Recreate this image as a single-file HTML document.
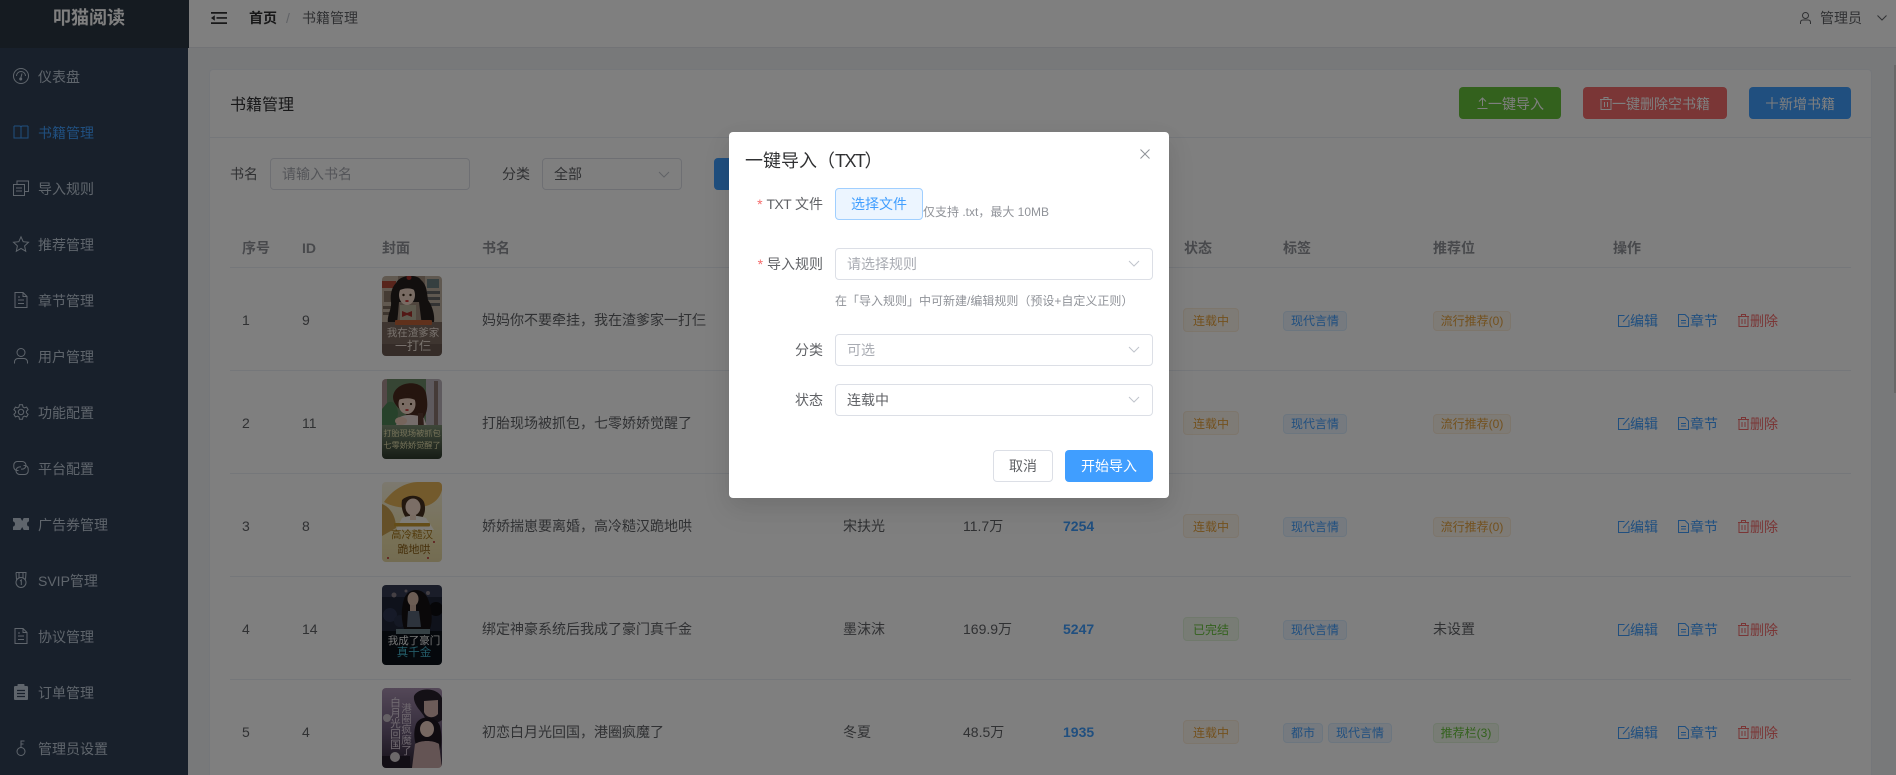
<!DOCTYPE html>
<html lang="zh-CN"><head><meta charset="utf-8"><title>书籍管理</title>
<style>
*{box-sizing:border-box}
html,body{margin:0;padding:0;width:1896px;height:775px;overflow:hidden;background:#f0f2f5;font-family:"Liberation Sans","Noto Sans CJK SC",sans-serif;font-size:14px;color:#606266}
#wrap{position:relative;width:1896px;height:775px;overflow:hidden;background:#f0f2f5}
.a,.t{position:absolute}
.t{white-space:nowrap;line-height:20px}
svg{display:block;overflow:visible}
.ic{position:absolute;fill:none;stroke:currentColor;stroke-width:1}
#side{left:0;top:0;width:188px;height:775px;background:#304156}
#logo{left:0;top:0;width:189px;height:48px;background:#2b3743;color:#fff;font-weight:700;font-size:18px;line-height:37px;padding-left:53px;white-space:nowrap}
.m{left:38px;color:#bfcbd9;line-height:22px;white-space:nowrap}
.si{left:13px;color:#bfcbd9}
#head{left:188px;top:0;width:1708px;height:48px;background:#fff;border-bottom:1px solid #e4e7ed}
#card{left:209px;top:69px;width:1663px;height:706px;background:#fff;border:1px solid #ebeef5;border-bottom:0;border-radius:4px 4px 0 0}
.btn{position:absolute;top:87px;height:32px;border-radius:4px;color:#fff;line-height:34px;white-space:nowrap}
.inp{position:absolute;height:32px;background:#fff;border:1px solid #dcdfe6;border-radius:4px}
.th{top:238px;font-weight:700;color:#909399}
.ln{position:absolute;left:230px;width:1621px;height:1px;background:#ebeef5}
.row{position:absolute;left:0;top:0;width:1896px;height:96px}
.row .t{top:43px}
.cv{position:absolute;left:382px;top:9px;width:60px;height:80px;border-radius:4px;overflow:hidden}
.cv svg{filter:blur(.3px)}
.tag{position:absolute;font-size:12px;text-align:center;border-radius:4px;border:1px solid;white-space:nowrap}
.st{left:1183px;top:41px;width:56px;height:24px;line-height:24px}
.lb{top:44px;height:20px;line-height:18px}
.w{color:#e6a23c;background:#fdf6ec;border-color:#faecd8}
.s{color:#67c23a;background:#f0f9eb;border-color:#e1f3d8}
.b{color:#409eff;background:#ecf5ff;border-color:#d9ecff}
.num{left:1063px;font-weight:700;color:#409eff}
.ac{position:absolute;top:44px;line-height:20px;white-space:nowrap}
.ac svg{position:absolute;left:0;top:3px;fill:none;stroke:currentColor;stroke-width:1}
.ac span{position:absolute;left:12px;top:0}
.blue{color:#409eff}.red{color:#f56c6c}
#mask{left:0;top:0;width:1896px;height:775px;background:rgba(0,0,0,.5)}
#dlg{left:729px;top:132px;width:440px;height:366px;background:#fff;border-radius:4px;box-shadow:0 12px 32px 4px rgba(0,0,0,.04),0 8px 20px rgba(0,0,0,.08)}
.lab{color:#606266;text-align:right;right:346px}
.star{color:#f56c6c}
.sel{position:absolute;left:106px;width:318px;height:32px;background:#fff;border:1px solid #dcdfe6;border-radius:4px;padding-left:11px;line-height:30px;color:#a8abb2}
.sel svg{position:absolute;right:12px;top:11px;fill:none;stroke:#c0c4cc;stroke-width:1}
#thumb{left:1894px;top:65px;width:2px;height:328px;background:#d0d0d0}
</style></head>
<body>
<div id="wrap">
<div class="a" id="head"></div>
<div class="a" id="side"></div>
<div class="a" id="logo">叩猫阅读</div>

<div class="a m" style="top:66px">仪表盘</div>
<div class="a m" style="top:122px;color:#409eff">书籍管理</div>
<div class="a m" style="top:178px">导入规则</div>
<div class="a m" style="top:234px">推荐管理</div>
<div class="a m" style="top:290px">章节管理</div>
<div class="a m" style="top:346px">用户管理</div>
<div class="a m" style="top:402px">功能配置</div>
<div class="a m" style="top:458px">平台配置</div>
<div class="a m" style="top:514px">广告券管理</div>
<div class="a m" style="top:570px">SVIP管理</div>
<div class="a m" style="top:626px">协议管理</div>
<div class="a m" style="top:682px">订单管理</div>
<div class="a m" style="top:738px">管理员设置</div>

<svg class="ic si" style="top:68px" width="16" height="16" viewBox="0 0 16 16"><circle cx="8" cy="8" r="7.500"/><path d="M3.500 8a4.500 4.500 0 0 1 9 0M9 5.500 7.800 10"/><circle cx="7.700" cy="11" r="1" fill="currentColor"/></svg>
<svg class="ic si" style="top:124px;color:#409eff" width="16" height="16" viewBox="0 0 16 16"><path d="M1 2h5.500C7.500 2 8 2.700 8 3.500V14.500M15 2H9.500C8.500 2 8 2.700 8 3.500M1 2v12h14V2"/></svg>
<svg class="ic si" style="top:180px" width="16" height="16" viewBox="0 0 16 16"><path d="M.5 4.500h11v11H.5zM4 4.500V1h11.500v10.500H11.500M3 8h6M3 11h6"/></svg>
<svg class="ic si" style="top:236px" width="16" height="16" viewBox="0 0 16 16"><path d="M8 .8l2.200 4.900 5.300.6-3.900 3.600 1.100 5.300L8 12.500l-4.700 2.700 1.100-5.300L.5 6.300l5.300-.6z"/></svg>
<svg class="ic si" style="top:292px" width="16" height="16" viewBox="0 0 16 16"><path d="M2 .5h8l4 4v11H2zM10 .5v4h4M5 8h6M5 11.500h6M5 5h2"/></svg>
<svg class="ic si" style="top:348px" width="16" height="16" viewBox="0 0 16 16"><circle cx="8" cy="4.500" r="4"/><path d="M1.500 15.500V14c0-2 1.500-3.500 3.500-3.500h6c2 0 3.500 1.500 3.500 3.500v1.500"/></svg>
<svg class="ic si" style="top:404px" width="16" height="16" viewBox="0 0 16 16"><path d="M6.500.8h3l.5 2.200 1.400.8 2.200-.7 1.500 2.600-1.700 1.500v1.600l1.700 1.500-1.500 2.600-2.200-.7-1.400.8-.5 2.200h-3L6 13l-1.400-.8-2.200.7L.9 10.300l1.700-1.500V7.200L.9 5.700l1.500-2.600 2.200.7L6 3z"/><circle cx="8" cy="8" r="2.700"/></svg>
<svg class="ic si" style="top:460px" width="16" height="16" viewBox="0 0 16 16"><path d="M5.500 10.500H4.300A3.500 3.500 0 0 1 .8 7V5A3.500 3.500 0 0 1 4.300 1.500h4.900A3.800 3.800 0 0 1 13 5.300 3.800 3.800 0 0 1 9.200 9.100H8"/><path d="M10.500 5.500h1.200A3.500 3.500 0 0 1 15.200 9v2a3.500 3.500 0 0 1-3.500 3.500H6.800A3.800 3.800 0 0 1 3 10.700 3.800 3.800 0 0 1 6.800 6.900H8"/></svg>
<svg class="a si" style="top:518px" width="16" height="12" viewBox="0 0 16 12"><path fill="#bfcbd9" d="M0 0h7.500l1.700 3 1.500-3H16v3.500c-1.200 0-2 1-2 2.500s.8 2.500 2 2.500V12h-5.300L9.200 9l-1.700 3H0V8.500c1.200 0 2-1 2-2.500s-.8-2.500-2-2.500z"/></svg>
<svg class="ic si" style="top:572px" width="16" height="16" viewBox="0 0 16 16"><path d="M3 .5h10l-.5 7M3 .5l.5 7M6 .5v5.500M10 .5v5.500"/><circle cx="8" cy="10.500" r="5"/><path d="M7 9l1.300-1v5"/></svg>
<svg class="ic si" style="top:628px" width="16" height="16" viewBox="0 0 16 16"><path d="M2 .5h8l4 4v11H2zM10 .5v4h4M5 8h6M5 11.500h6M5 5h2"/></svg>
<svg class="a si" style="top:684px" width="16" height="16" viewBox="0 0 16 16"><path fill="#bfcbd9" d="M2 2h2.500V.8c0-.4.300-.8.800-.8h5.400c.5 0 .8.400.8.800V2H14c.5 0 1 .5 1 1v12c0 .5-.5 1-1 1H2c-.5 0-1-.5-1-1V3c0-.5.500-1 1-1z"/><path stroke="#304156" stroke-width="1.300" d="M4 6.500h8M4 9.500h8M4 12.500h8"/></svg>
<svg class="ic si" style="top:740px" width="16" height="16" viewBox="0 0 16 16"><circle cx="8" cy="11.500" r="4"/><path d="M8 7.500V.5M8 1h3.500M8 4h2.500"/></svg>

<svg class="a" style="left:211px;top:12px" width="16" height="12" viewBox="0 0 16 12"><path fill="#303133" d="M0 0h16v1.700H0zM5.500 5.100H16v1.700H5.500zM0 10.200h16V12H0zM0 6l3.800-2.800v5.600z"/></svg>
<div class="t" style="left:249px;top:8px;font-weight:700;color:#303133">首页</div>
<div class="t" style="left:286px;top:8px;color:#c0c4cc">/</div>
<div class="t" style="left:302px;top:8px">书籍管理</div>
<svg class="ic" style="left:1800px;top:12px;color:#606266" width="11" height="12" viewBox="0 0 11 12"><circle cx="5.500" cy="3.500" r="3"/><path d="M.5 12v-1.500C.5 9 1.500 8 3 8h5c1.500 0 2.500 1 2.500 2.500V12"/></svg>
<div class="t" style="left:1820px;top:8px;color:#606266">管理员</div>
<svg class="ic" style="left:1877px;top:15px;color:#606266" width="10" height="6" viewBox="0 0 10 6"><path d="M.5.500 5 5 9.500.5"/></svg>

<div class="a" id="card"></div>
<div class="t" style="left:230px;top:96px;font-size:16px;color:#303133">书籍管理</div>
<div class="a" style="left:210px;top:137px;width:1661px;height:1px;background:#ebeef5"></div>
<div class="btn" style="left:1459px;width:102px;background:#67c23a;padding-left:29px">一键导入</div>
<svg class="ic" style="left:1477px;top:97px;color:#fff" width="11" height="12" viewBox="0 0 11 12"><path d="M.5 11.500h10M5.500 9V1M2 4.500 5.500 1 9 4.500"/></svg>
<div class="btn" style="left:1583px;width:144px;background:#f56c6c;padding-left:29px">一键删除空书籍</div>
<svg class="ic" style="left:1600px;top:97px;color:#fff" width="12" height="13" viewBox="0 0 12 13"><path d="M0 2.500h12M4 2.500V.5h4v2M1 2.500h10v10H1zM4.500 5v5M7.500 5v5"/></svg>
<div class="btn" style="left:1749px;width:102px;background:#409eff;padding-left:30px">新增书籍</div>
<svg class="ic" style="left:1766px;top:97px;color:#fff" width="12" height="12" viewBox="0 0 12 12"><path d="M6 0v12M0 6h12"/></svg>

<div class="t" style="left:230px;top:164px">书名</div>
<div class="inp" style="left:270px;top:158px;width:200px;padding-left:11px;line-height:30px;color:#a8abb2">请输入书名</div>
<div class="t" style="left:502px;top:164px">分类</div>
<div class="inp" style="left:542px;top:158px;width:140px;padding-left:11px;line-height:30px">全部</div>
<svg class="ic" style="left:658px;top:171px;color:#c0c4cc" width="12" height="7" viewBox="0 0 12 7"><path d="M1 1l5 5 5-5"/></svg>
<div class="btn" style="left:714px;top:158px;width:80px;background:#409eff"></div>

<div class="t th" style="left:242px">序号</div>
<div class="t th" style="left:302px">ID</div>
<div class="t th" style="left:382px">封面</div>
<div class="t th" style="left:482px">书名</div>
<div class="t th" style="left:1184px">状态</div>
<div class="t th" style="left:1283px">标签</div>
<div class="t th" style="left:1433px">推荐位</div>
<div class="t th" style="left:1613px">操作</div>
<div class="ln" style="top:267px"></div>
<div class="ln" style="top:370px"></div>
<div class="ln" style="top:473px"></div>
<div class="ln" style="top:576px"></div>
<div class="ln" style="top:679px"></div>

<!-- ROW 1 -->
<div class="row" style="top:267px">
<div class="t" style="left:242px">1</div><div class="t" style="left:302px">9</div>
<div class="cv"><svg width="60" height="80" viewBox="0 0 60 80">
<rect width="60" height="80" fill="#a08c7c"/>
<rect width="16" height="46" fill="#c2b2a0"/><rect y="5" width="14" height="7" fill="#b04a38"/><rect x="2" y="15" width="10" height="11" fill="#8a7868"/><rect x="1" y="30" width="11" height="3" fill="#7a6a5c"/><rect x="1" y="36" width="11" height="3" fill="#7a6a5c"/>
<rect x="43" width="17" height="46" fill="#beb0a0"/><rect x="45" y="3" width="12" height="9" fill="#6a7e80"/><rect x="45" y="15" width="13" height="3" fill="#666"/><rect x="45" y="21" width="13" height="3" fill="#666"/><rect x="45" y="27" width="13" height="3" fill="#666"/>
<path fill="#241f1d" d="M14 7C18-2 36-2 39 4c6 5 6 13 7 20 5 7 8 18 5 26H40l-3-24-20 0-2 24H7C3 42 10 34 9 26 8 18 10 11 14 7z"/>
<ellipse cx="25" cy="19" rx="8" ry="10" fill="#f0d6c6"/><path fill="#241f1d" d="M16 15c3-8 16-9 18 0-5-4-13-3-18 0z"/>
<circle cx="21.500" cy="19" r="1.200" fill="#321"/><circle cx="28.500" cy="19" r="1.200" fill="#321"/><ellipse cx="25" cy="25" rx="1.800" ry="1" fill="#c33"/>
<rect x="18" y="29" width="16" height="18" fill="#b8b29a"/><path fill="#a5302a" d="M20 35l5 2 5-2v6l-5-2-5 2z"/><circle cx="27" cy="1.500" r="2.500" fill="#a8302a"/>
<rect y="46" width="60" height="34" fill="#7d6a60"/><rect y="68" width="60" height="12" fill="#6a5850"/>
<rect x="13" y="44" width="37" height="5" rx="1" fill="#c06238"/>
<text x="31" y="60" text-anchor="middle" font-size="10.500" fill="#f0e4da">我在渣爹家</text>
<text x="31" y="74" text-anchor="middle" font-size="12" fill="#f0e4da">一打仨</text>
</svg></div>
<div class="t" style="left:482px">妈妈你不要牵挂，我在渣爹家一打仨</div>
<div class="tag st w">连载中</div><div class="tag lb b" style="left:1283px;width:64px">现代言情</div><div class="tag lb w" style="left:1433px;width:78px">流行推荐(0)</div>
<div class="ac blue" style="left:1618px"><svg width="12" height="13" viewBox="0 0 12 13"><path d="M6.500 1.500H.5v11h10.500V6M5 8l6-7"/></svg><span>编辑</span></div>
<div class="ac blue" style="left:1678px"><svg width="11" height="13" viewBox="0 0 11 13"><path d="M.5.500h6.500l3.500 3.500v8.500H.5zM3 6.500h5M3 9h5"/></svg><span>章节</span></div>
<div class="ac red" style="left:1738px"><svg width="11" height="13" viewBox="0 0 11 13"><path d="M0 2.500h11M3.500 2.500V.5h4v2M1 2.500h9v10H1zM4 5v5M7 5v5"/></svg><span>删除</span></div>
</div>

<!-- ROW 2 -->
<div class="row" style="top:370px">
<div class="t" style="left:242px">2</div><div class="t" style="left:302px">11</div>
<div class="cv"><svg width="60" height="80" viewBox="0 0 60 80">
<defs><linearGradient id="g2" x1="0" y1="0" x2="0" y2="1"><stop offset="0" stop-color="#7d8f74"/><stop offset="1" stop-color="#2e3a2c"/></linearGradient></defs>
<rect width="60" height="80" fill="#6d8a68"/>
<rect x="0" width="5" height="40" fill="#a89090"/><rect x="44" y="0" width="16" height="48" fill="#bcb4bc"/><rect x="52" y="2" width="4" height="44" fill="#8a7670"/>
<path fill="#4f8456" d="M5 24c6-4 10 2 11 10l-2 14H0V30z"/>
<path fill="#4a2a1e" d="M11 18C12 2 40-1 44 14c2 10 2 18-2 24-2 8-8 10-10 6-3-8-21-14-21-26z"/>
<ellipse cx="25" cy="25" rx="8.500" ry="10" fill="#f4d8c8"/><path fill="#4a2a1e" d="M16 21c3-8 17-9 19 1-6-4-13-3-19-1z"/>
<circle cx="21" cy="25" r="1.100" fill="#321"/><circle cx="29" cy="25" r="1.100" fill="#321"/><ellipse cx="25" cy="31" rx="1.800" ry="1" fill="#c44"/>
<path fill="#eadad6" d="M18 38c6-3 16-3 24 1l4 11H12z"/><ellipse cx="19" cy="42" rx="6" ry="4" fill="#eccab8"/><path fill="#5a3a30" d="M36 34l5 0 1 14h-6z"/>
<rect y="46" width="60" height="34" fill="url(#g2)"/>
<text x="30" y="57" text-anchor="middle" font-size="8.200" fill="#e8e2b0">打胎现场被抓包</text>
<text x="30" y="69" text-anchor="middle" font-size="8.200" fill="#e8e2b0">七零娇娇觉醒了</text>
</svg></div>
<div class="t" style="left:482px">打胎现场被抓包，七零娇娇觉醒了</div>
<div class="tag st w">连载中</div><div class="tag lb b" style="left:1283px;width:64px">现代言情</div><div class="tag lb w" style="left:1433px;width:78px">流行推荐(0)</div>
<div class="ac blue" style="left:1618px"><svg width="12" height="13" viewBox="0 0 12 13"><path d="M6.500 1.500H.5v11h10.500V6M5 8l6-7"/></svg><span>编辑</span></div>
<div class="ac blue" style="left:1678px"><svg width="11" height="13" viewBox="0 0 11 13"><path d="M.5.500h6.500l3.500 3.500v8.500H.5zM3 6.500h5M3 9h5"/></svg><span>章节</span></div>
<div class="ac red" style="left:1738px"><svg width="11" height="13" viewBox="0 0 11 13"><path d="M0 2.500h11M3.500 2.500V.5h4v2M1 2.500h9v10H1zM4 5v5M7 5v5"/></svg><span>删除</span></div>
</div>

<!-- ROW 3 -->
<div class="row" style="top:473px">
<div class="t" style="left:242px">3</div><div class="t" style="left:302px">8</div>
<div class="cv"><svg width="60" height="80" viewBox="0 0 60 80">
<defs><linearGradient id="g3" x1="0" y1="0" x2="0" y2="1"><stop offset="0" stop-color="#f8f2de"/><stop offset=".7" stop-color="#f0e2ac"/><stop offset="1" stop-color="#e6d8a4"/></linearGradient></defs>
<rect width="60" height="80" fill="url(#g3)"/>
<path fill="#e6b458" d="M2 20C10 8 24 0 36 0h24v8c-2 8-8 14-16 16-14 4-32 2-42-4z"/>
<path fill="#caa050" d="M0 22c6 2 14 10 14 24L0 54z"/>
<path fill="#46301e" d="M20 18c6-6 18-6 22 2 2 6 1 12-2 16H24c-4-6-5-12-4-18z"/>
<ellipse cx="31" cy="25" rx="7.500" ry="8.500" fill="#f6dccc"/>
<path fill="#fcf8ee" d="M20 36c6-3 16-3 24 0l8 12H14z"/><path fill="#f2d8c4" d="M28 33h6v5h-6z"/>
<rect x="12" y="41" width="36" height="3.500" rx="1" fill="#c89a30"/>
<text x="30" y="56" text-anchor="middle" font-size="10.500" fill="#a47418">高冷糙汉</text>
<text x="32" y="71" text-anchor="middle" font-size="11" fill="#8a5e14">跪地哄</text>
<circle cx="6" cy="76" r="1" fill="#b33"/><circle cx="52" cy="60" r="1" fill="#b33"/><circle cx="46" cy="76" r="1" fill="#b33"/>
</svg></div>
<div class="t" style="left:482px">娇娇揣崽要离婚，高冷糙汉跪地哄</div>
<div class="t" style="left:843px">宋扶光</div><div class="t" style="left:963px">11.7万</div><div class="t num">7254</div>
<div class="tag st w">连载中</div><div class="tag lb b" style="left:1283px;width:64px">现代言情</div><div class="tag lb w" style="left:1433px;width:78px">流行推荐(0)</div>
<div class="ac blue" style="left:1618px"><svg width="12" height="13" viewBox="0 0 12 13"><path d="M6.500 1.500H.5v11h10.500V6M5 8l6-7"/></svg><span>编辑</span></div>
<div class="ac blue" style="left:1678px"><svg width="11" height="13" viewBox="0 0 11 13"><path d="M.5.500h6.500l3.500 3.500v8.500H.5zM3 6.500h5M3 9h5"/></svg><span>章节</span></div>
<div class="ac red" style="left:1738px"><svg width="11" height="13" viewBox="0 0 11 13"><path d="M0 2.500h11M3.500 2.500V.5h4v2M1 2.500h9v10H1zM4 5v5M7 5v5"/></svg><span>删除</span></div>
</div>

<!-- ROW 4 -->
<div class="row" style="top:576px">
<div class="t" style="left:242px">4</div><div class="t" style="left:302px">14</div>
<div class="cv"><svg width="60" height="80" viewBox="0 0 60 80">
<rect width="60" height="80" fill="#10151f"/><rect width="60" height="46" fill="#1e2536"/><rect width="60" height="12" fill="#343a52"/>
<circle cx="8" cy="30" r="7" fill="#2c3450"/><circle cx="18" cy="36" r="6" fill="#283048"/><circle cx="54" cy="24" r="7" fill="#0c0c10"/><circle cx="12" cy="10" r="2.500" fill="#8a8088"/><circle cx="46" cy="8" r="2" fill="#8a8088"/><circle cx="24" cy="6" r="1.500" fill="#8a8088"/>
<path fill="#141012" d="M22 14c4-12 20-12 24 0 4 10 5 22 2 30H22c-3-10-3-20 0-30z"/>
<ellipse cx="31" cy="14" rx="5.500" ry="7" fill="#d8baa8"/><path fill="#cfb0a0" d="M28 20h6v6h-6z"/><path fill="#5a6678" d="M26 26h11l2 16H25z"/>
<rect y="46" width="60" height="34" fill="#0a1018"/><rect x="14" y="44" width="34" height="5" fill="#6a8088"/>
<text x="32" y="59" text-anchor="middle" font-size="10.500" fill="#f0f0f0">我成了豪门</text>
<text x="32" y="71" text-anchor="middle" font-size="11.500" fill="#48b8d0">真千金</text>
</svg></div>
<div class="t" style="left:482px">绑定神豪系统后我成了豪门真千金</div>
<div class="t" style="left:843px">墨沫沫</div><div class="t" style="left:963px">169.9万</div><div class="t num">5247</div>
<div class="tag st s">已完结</div><div class="tag lb b" style="left:1283px;width:64px">现代言情</div><div class="t" style="left:1433px">未设置</div>
<div class="ac blue" style="left:1618px"><svg width="12" height="13" viewBox="0 0 12 13"><path d="M6.500 1.500H.5v11h10.500V6M5 8l6-7"/></svg><span>编辑</span></div>
<div class="ac blue" style="left:1678px"><svg width="11" height="13" viewBox="0 0 11 13"><path d="M.5.500h6.500l3.500 3.500v8.500H.5zM3 6.500h5M3 9h5"/></svg><span>章节</span></div>
<div class="ac red" style="left:1738px"><svg width="11" height="13" viewBox="0 0 11 13"><path d="M0 2.500h11M3.500 2.500V.5h4v2M1 2.500h9v10H1zM4 5v5M7 5v5"/></svg><span>删除</span></div>
</div>

<!-- ROW 5 -->
<div class="row" style="top:679px">
<div class="t" style="left:242px">5</div><div class="t" style="left:302px">4</div>
<div class="cv"><svg width="60" height="80" viewBox="0 0 60 80">
<defs><linearGradient id="g5" x1="0" y1="0" x2="0" y2="1"><stop offset="0" stop-color="#a890b0"/><stop offset=".55" stop-color="#6a5a78"/><stop offset="1" stop-color="#2c2232"/></linearGradient></defs>
<rect width="60" height="80" fill="url(#g5)"/>
<path fill="#28202c" d="M32 8C36-1 56-1 60 10v22c-8 6-16 2-18-4-4-6-11-12-10-20z"/><path fill="#d8b6b0" d="M42 13l14-1v14c-4 5-12 4-14-2z"/>
<path fill="#1e1620" d="M34 36c4-9 20-9 24 2 2 10 2 18 0 24H36c-4-8-5-18-2-26z"/>
<ellipse cx="45" cy="41" rx="7" ry="8" fill="#eccfc2"/>
<path fill="#c8a8a8" d="M33 56c6-4 18-4 24 0l3 24H30z"/>
<rect x="0" y="68" width="28" height="12" fill="#241c2a"/>
<text x="13" y="9" font-size="10.500" fill="#e6dae6" style="writing-mode:vertical-rl">白月光回国</text>
<text x="24" y="15" font-size="10.500" fill="#dccedc" style="writing-mode:vertical-rl">港圈疯魔了</text>
<circle cx="13" cy="69" r="5" fill="#d8d0d4"/><circle cx="5" cy="30" r="4" fill="#c8c0c8"/>
</svg></div>
<div class="t" style="left:482px">初恋白月光回国，港圈疯魔了</div>
<div class="t" style="left:843px">冬夏</div><div class="t" style="left:963px">48.5万</div><div class="t num">1935</div>
<div class="tag st w">连载中</div><div class="tag lb b" style="left:1283px;width:40px">都市</div><div class="tag lb b" style="left:1328px;width:64px">现代言情</div><div class="tag lb s" style="left:1433px;width:66px">推荐栏(3)</div>
<div class="ac blue" style="left:1618px"><svg width="12" height="13" viewBox="0 0 12 13"><path d="M6.500 1.500H.5v11h10.500V6M5 8l6-7"/></svg><span>编辑</span></div>
<div class="ac blue" style="left:1678px"><svg width="11" height="13" viewBox="0 0 11 13"><path d="M.5.500h6.500l3.500 3.500v8.500H.5zM3 6.500h5M3 9h5"/></svg><span>章节</span></div>
<div class="ac red" style="left:1738px"><svg width="11" height="13" viewBox="0 0 11 13"><path d="M0 2.500h11M3.500 2.500V.5h4v2M1 2.500h9v10H1zM4 5v5M7 5v5"/></svg><span>删除</span></div>
</div>

<div class="a" id="thumb"></div>
<div class="a" id="mask"></div>

<div class="a" id="dlg">
<div class="t" style="left:16px;top:17px;font-size:18px;line-height:24px;color:#303133">一键导入（<span style="letter-spacing:-1.500px">TXT</span>）</div>
<svg class="ic" style="left:411px;top:17px;color:#909399" width="10" height="10" viewBox="0 0 10 10"><path d="M.5.500l9 9M9.500.500l-9 9"/></svg>
<div class="t lab" style="top:62px"><span class="star">*</span> <span style="letter-spacing:-.6px">TXT</span> 文件</div>
<div class="a" style="left:106px;top:56px;width:88px;height:32px;background:#ecf5ff;border:1px solid #a0cfff;border-radius:4px;color:#409eff;text-align:center;line-height:30px">选择文件</div>
<div class="t" style="left:194px;top:70px;font-size:12px;color:#909399">仅支持 .txt，最大 10MB</div>
<div class="t lab" style="top:122px"><span class="star">*</span> 导入规则</div>
<div class="sel" style="top:116px">请选择规则<svg width="12" height="8" viewBox="0 0 12 8"><path d="M1 1l5 5 5-5"/></svg></div>
<div class="t" style="left:106px;top:159px;font-size:12px;color:#909399">在「导入规则」中可新建/编辑规则（预设+自定义正则）</div>
<div class="t lab" style="top:208px">分类</div>
<div class="sel" style="top:202px">可选<svg width="12" height="8" viewBox="0 0 12 8"><path d="M1 1l5 5 5-5"/></svg></div>
<div class="t lab" style="top:258px">状态</div>
<div class="sel" style="top:252px;color:#606266">连载中<svg width="12" height="8" viewBox="0 0 12 8"><path d="M1 1l5 5 5-5"/></svg></div>
<div class="a" style="left:264px;top:318px;width:60px;height:32px;background:#fff;border:1px solid #dcdfe6;border-radius:4px;text-align:center;line-height:30px">取消</div>
<div class="a" style="left:336px;top:318px;width:88px;height:32px;background:#409eff;border-radius:4px;color:#fff;text-align:center;line-height:32px">开始导入</div>
</div>
</div>
</body></html>
